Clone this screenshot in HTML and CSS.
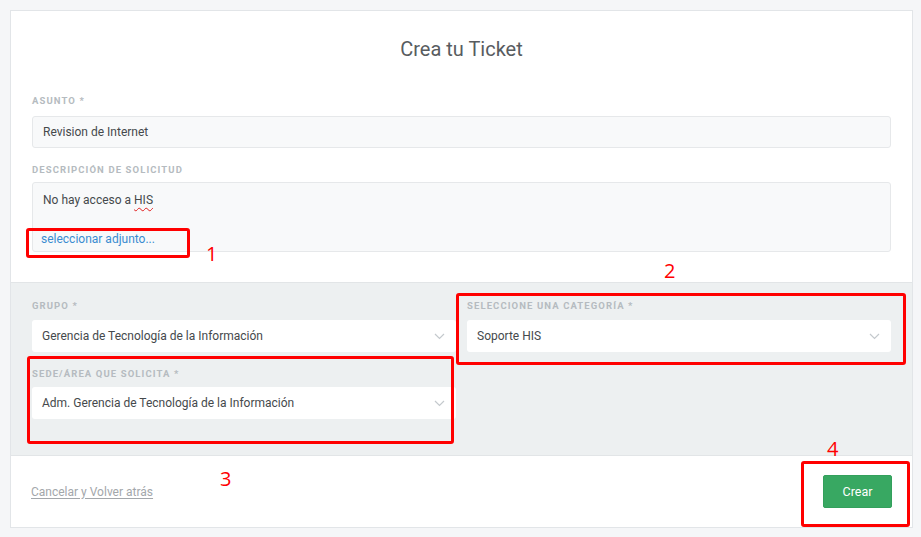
FILE: index.html
```html
<!DOCTYPE html>
<html lang="es">
<head>
  <meta charset="UTF-8">
  <title>Crea tu Ticket</title>
  <link rel="stylesheet" href="styles.css">
</head>
<body>

  <div class="ticket-card">
    <h2 class="ticket-title">Crea tu Ticket</h2>

    <!-- Main fields -->
    <div class="ticket-main">
      <label class="field-label">Asunto *</label>
      <div class="text-input">Revision de Internet</div>

      <label class="field-label label-desc">Descripción de solicitud</label>
      <div class="text-area">
        <div class="text-area-body">No hay acceso a <span class="spell">HIS</span></div>
        <a class="attach-link" href="#">seleccionar adjunto...</a>
      </div>
    </div>

    <!-- Ticket attributes -->
    <div class="ticket-attrs">
      <div class="attr-grid">
        <div class="attr">
          <label class="field-label">Grupo *</label>
          <div class="select-box">
            <span>Gerencia de Tecnología de la Información</span>
            <svg class="chevron" width="11" height="7" viewBox="0 0 11 7"><polyline points="1,1 5.5,5.5 10,1" fill="none" stroke="#c4c9cd" stroke-width="1.2"/></svg>
          </div>
        </div>
        <div class="attr">
          <label class="field-label">Seleccione una categoría *</label>
          <div class="select-box">
            <span>Soporte HIS</span>
            <svg class="chevron" width="11" height="7" viewBox="0 0 11 7"><polyline points="1,1 5.5,5.5 10,1" fill="none" stroke="#c4c9cd" stroke-width="1.2"/></svg>
          </div>
        </div>
        <div class="attr attr-second">
          <label class="field-label">Sede/Área que solicita *</label>
          <div class="select-box">
            <span>Adm. Gerencia de Tecnología de la Información</span>
            <svg class="chevron" width="11" height="7" viewBox="0 0 11 7"><polyline points="1,1 5.5,5.5 10,1" fill="none" stroke="#c4c9cd" stroke-width="1.2"/></svg>
          </div>
        </div>
      </div>
    </div>

    <!-- Actions -->
    <div class="ticket-footer">
      <a class="cancel-link" href="#">Cancelar y Volver atrás</a>
      <button class="btn-create">Crear</button>
    </div>
  </div>

  <!-- Annotations drawn over the screenshot -->
  <div class="mark mark-1"></div>
  <div class="mark mark-2"></div>
  <div class="mark mark-3"></div>
  <div class="mark mark-4"></div>
  <span class="mark-num num-1">1</span>
  <span class="mark-num num-2">2</span>
  <span class="mark-num num-3">3</span>
  <span class="mark-num num-4">4</span>

</body>
</html>
```

FILE: styles.css
```css
body {
  margin: 0;
  padding: 10px;
  background: #f5f6f8;
  font-family: 'Roboto', 'Liberation Sans', sans-serif;
  color: #4f5356;
  position: relative;
}
.ticket-card {
  width: 901px;
  height: 516px;
  background: #fff;
  border: 1px solid #e2e5e8;
  display: flex;
  flex-direction: column;
}
.ticket-title {
  margin: 26px 0 0;
  font-size: 20px;
  line-height: 24px;
  font-weight: 400;
  text-align: center;
  color: #585c5f;
}
.ticket-main {
  padding: 34px 21px 30px;
}
.field-label {
  display: block;
  font-size: 9.5px;
  line-height: 12px;
  font-weight: 700;
  letter-spacing: 1.1px;
  text-transform: uppercase;
  color: #b5bbc0;
  margin-bottom: 9px;
}
.label-desc {
  margin-top: 16px;
  margin-bottom: 6px;
}
.text-input {
  height: 30px;
  line-height: 30px;
  padding: 0 10px;
  background: #f8f9fa;
  border: 1px solid #e6e8ea;
  border-radius: 3px;
  font-size: 12px;
  color: #45494c;
}
.text-area {
  height: 68px;
  padding: 0 10px;
  background: #f8f9fa;
  border: 1px solid #e6e8ea;
  border-radius: 3px;
  font-size: 12px;
  color: #45494c;
  display: flex;
  flex-direction: column;
}
.text-area-body {
  margin-top: 9px;
  line-height: 16px;
}
.spell {
  text-decoration: underline wavy #e02020;
  text-decoration-thickness: 1px;
  text-underline-offset: 3px;
}
.attach-link {
  margin-top: 23px;
  margin-left: -2px;
  font-size: 12px;
  line-height: 16px;
  color: #3a8cd0;
  text-decoration: none;
}
.ticket-attrs {
  background: #edf0f1;
  border-top: 1px solid #e2e5e7;
  border-bottom: 1px solid #e2e5e7;
  padding: 17px 21px 0;
  height: 174px;
  box-sizing: border-box;
}
.attr-grid {
  display: grid;
  grid-template-columns: 1fr 1fr;
  column-gap: 11px;
  row-gap: 16px;
}
.attr .field-label {
  margin-bottom: 8px;
}
.attr-second .field-label {
  margin-bottom: 7px;
}
.select-box {
  height: 32px;
  padding: 0 10px;
  background: #fff;
  border-radius: 3px;
  display: flex;
  align-items: center;
  justify-content: space-between;
  font-size: 12px;
  color: #45494c;
}
.chevron {
  margin-right: 1px;
}
.ticket-footer {
  flex: 1;
  display: flex;
  align-items: center;
  justify-content: space-between;
  padding: 0 20px 0 20px;
}
.cancel-link {
  font-size: 12px;
  color: #a3a7ab;
  text-decoration: underline;
  text-underline-offset: 2px;
}
.btn-create {
  width: 69px;
  height: 33px;
  background: #38a862;
  border: 1px solid #33a05c;
  border-radius: 2px;
  color: #fff;
  font-family: inherit;
  font-size: 12.5px;
  padding: 0;
}
.mark {
  position: absolute;
  border: 3px solid #ff0000;
  border-radius: 3px;
  box-sizing: border-box;
}
.mark-1 { left: 26px; top: 228px; width: 164px; height: 30px; }
.mark-2 { left: 456px; top: 293px; width: 450px; height: 72px; }
.mark-3 { left: 27px; top: 356px; width: 427px; height: 88px; }
.mark-4 { left: 801px; top: 461px; width: 109px; height: 66px; }
.mark-num {
  position: absolute;
  font-family: 'Open Sans', sans-serif;
  font-size: 20px;
  line-height: 20px;
  color: #ff0000;
}
.num-1 { left: 206px; top: 244px; }
.num-2 { left: 664px; top: 261px; }
.num-3 { left: 220px; top: 469px; }
.num-4 { left: 827px; top: 439px; }
```
